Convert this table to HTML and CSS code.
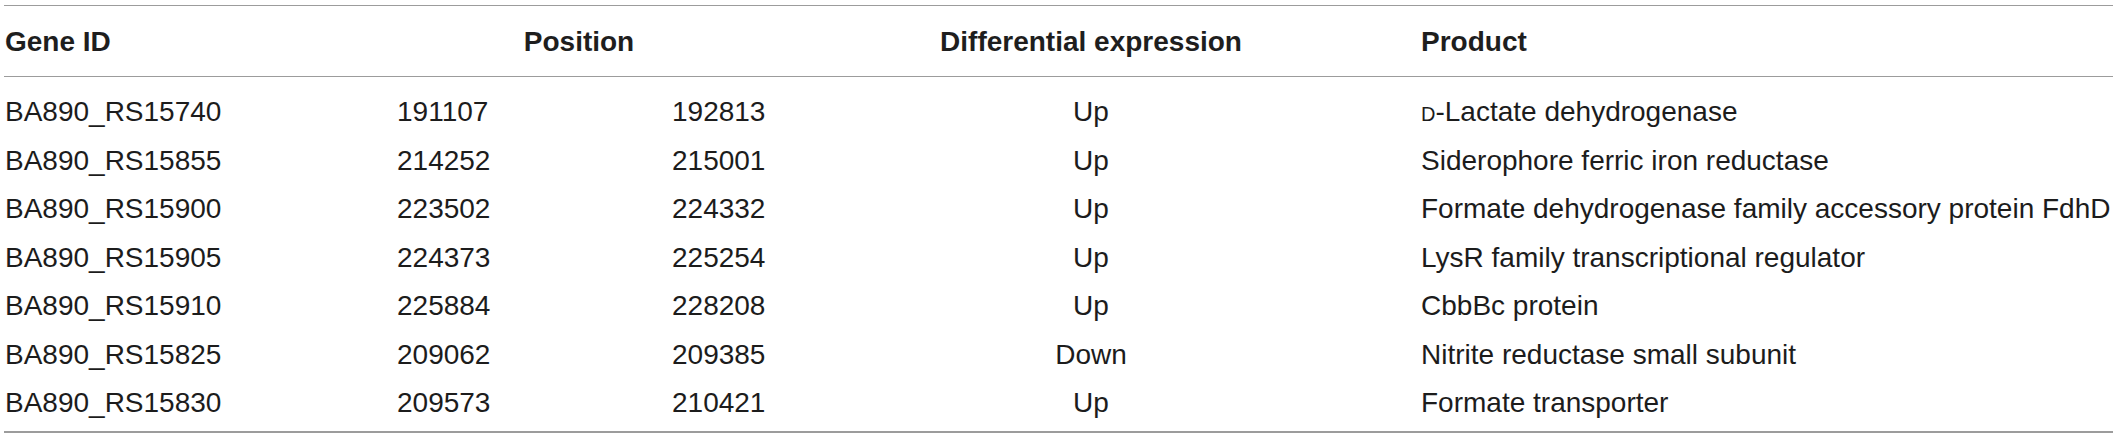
FILE: index.html
```html
<!DOCTYPE html>
<html lang="en">
<head>
<meta charset="utf-8">
<title>Differentially expressed genes</title>
<link rel="stylesheet" href="styles.css">
</head>
<body>
<table class="genes">
  <colgroup>
    <col class="c-id">
    <col class="c-start">
    <col class="c-end">
    <col class="c-expr">
    <col class="c-prod">
  </colgroup>
  <thead>
    <tr>
      <th class="h-id">Gene ID</th>
      <th class="h-pos" colspan="2">Position</th>
      <th class="h-expr">Differential expression</th>
      <th class="h-prod">Product</th>
    </tr>
  </thead>
  <tbody>
    <tr class="first">
      <td>BA890_RS15740</td><td>191107</td><td>192813</td><td class="expr">Up</td><td><span class="sc">d</span>-Lactate dehydrogenase</td>
    </tr>
    <tr>
      <td>BA890_RS15855</td><td>214252</td><td>215001</td><td class="expr">Up</td><td>Siderophore ferric iron reductase</td>
    </tr>
    <tr>
      <td>BA890_RS15900</td><td>223502</td><td>224332</td><td class="expr">Up</td><td>Formate dehydrogenase family accessory protein FdhD</td>
    </tr>
    <tr>
      <td>BA890_RS15905</td><td>224373</td><td>225254</td><td class="expr">Up</td><td>LysR family transcriptional regulator</td>
    </tr>
    <tr>
      <td>BA890_RS15910</td><td>225884</td><td>228208</td><td class="expr">Up</td><td>CbbBc protein</td>
    </tr>
    <tr>
      <td>BA890_RS15825</td><td>209062</td><td>209385</td><td class="expr">Down</td><td>Nitrite reductase small subunit</td>
    </tr>
    <tr class="last">
      <td>BA890_RS15830</td><td>209573</td><td>210421</td><td class="expr">Up</td><td>Formate transporter</td>
    </tr>
  </tbody>
</table>
</body>
</html>
```

FILE: styles.css
```css
html, body {
  margin: 0;
  padding: 0;
  background: #ffffff;
}

.genes {
  border-collapse: separate;
  border-spacing: 0;
  table-layout: fixed;
  width: 2109px;
  margin: 5px 0 0 4px;
  border-top: 1px solid #9c9c9c;
  border-bottom: 2px solid #9c9c9c;
  font-family: "Liberation Sans", Arial, sans-serif;
  font-size: 28px;
  color: #1c1c1c;
}

.c-id { width: 393px; }
.c-start { width: 275px; }
.c-end { width: 89px; }
.c-expr { width: 660px; }
.c-prod { width: 692px; }

.genes th {
  padding: 2px 0 0 0;
  line-height: 68px;
  font-weight: bold;
  color: #1e1e1e;
  text-align: left;
  white-space: nowrap;
  border-bottom: 1px solid #9c9c9c;
}

.genes th.h-id { padding-left: 1px; }
.genes th.h-pos { text-align: center; }
.genes th.h-expr { text-align: center; }

.genes td {
  padding: 0;
  line-height: 48.5px;
  white-space: nowrap;
  overflow: visible;
  font-weight: normal;
}

.genes td:first-child { padding-left: 1px; }

.genes tr.first td { padding-top: 11px; }
.genes tr.last td { padding-bottom: 3.5px; }

.genes td.expr { text-align: center; }

.sc { font-variant: small-caps; }
```
